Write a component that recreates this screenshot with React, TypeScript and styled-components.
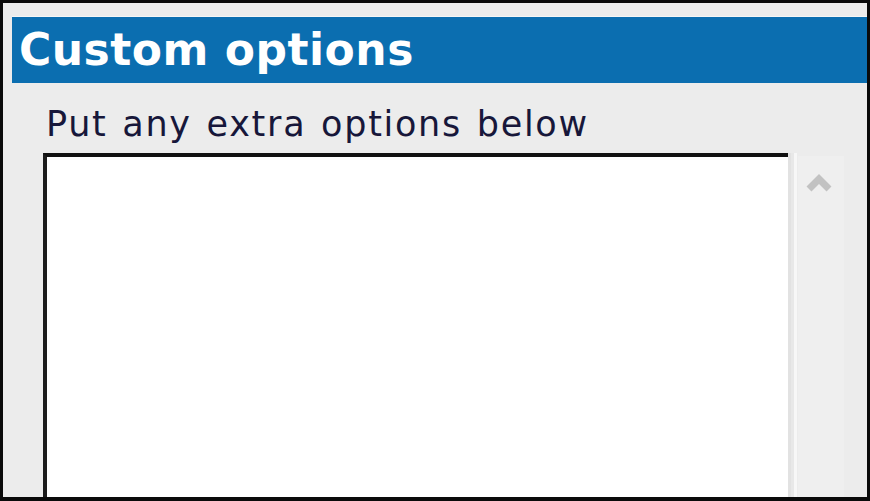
import React from 'react'
import styled, { createGlobalStyle } from 'styled-components'

const GlobalStyle = createGlobalStyle`
    html, body {
        margin: 0;
        padding: 0;
        background: #ececec;
    }
`

const Frame = styled.section`
    box-sizing: border-box;
    width: 870px;
    height: 501px;
    border: 3px solid #0a0a0a;
    border-bottom-width: 4px;
    background: #ececec;
    padding: 13px 0 0 9px;
    display: flex;
    flex-direction: column;
    overflow: hidden;
    font-family: "DejaVu Sans", Verdana, sans-serif;
`

const Header = styled.h1`
    margin: 0;
    height: 66px;
    line-height: 66px;
    padding-left: 7px;
    background: #0b6eb0;
    border-top: 1px solid #f6f6f6;
    color: #ffffff;
    font-size: 44px;
    font-weight: bold;
    letter-spacing: 0.5px;
    white-space: nowrap;
`

const Body = styled.div`
    flex: 1;
    display: flex;
    flex-direction: column;
    padding: 21px 23px 0 31px;
    min-height: 0;
`

const Label = styled.label`
    display: block;
    height: 40px;
    line-height: 40px;
    margin: 0 0 9px 3px;
    font-size: 35px;
    letter-spacing: 1.7px;
    word-spacing: 2px;
    color: #17173a;
    white-space: nowrap;
`

const Field = styled.div`
    flex: 1;
    display: flex;
    min-height: 0;
`

const Editor = styled.textarea`
    flex: 1;
    box-sizing: border-box;
    margin: 0;
    padding: 4px 6px;
    resize: none;
    outline: none;
    background: #ffffff;
    border: none;
    border-top: 4px solid #111111;
    border-left: 4px solid #1c1c1c;
    font-family: "DejaVu Sans", Verdana, sans-serif;
    font-size: 30px;
    overflow: hidden;
`

const Edge = styled.div`
    width: 10px;
    background: linear-gradient(
        to right,
        #e2e2e2 0 3px,
        #e8e8e8 3px 6px,
        #f7f7f7 6px 9px,
        #ececec 9px
    );
`

const Scrollbar = styled.div`
    width: 46px;
    margin-top: 3px;
    background: #efefef;
    display: flex;
    justify-content: center;
    padding: 15px 4px 0 0;
    box-sizing: border-box;
`

const Arrow = () => (
    <svg width="26" height="22" viewBox="0 0 26 22">
        <polyline
            points="3,18 13,8 23,18"
            fill="none"
            stroke="#c2c2c2"
            strokeWidth="7"
            strokeLinejoin="miter"
        />
    </svg>
)

export default function App() {
    return (
        <>
            <GlobalStyle />
            <Frame>
                <Header>Custom options</Header>
                <Body>
                    <Label htmlFor="extra-options">Put any extra options below</Label>
                    <Field>
                        <Editor id="extra-options" readOnly />
                        <Edge />
                        <Scrollbar>
                            <Arrow />
                        </Scrollbar>
                    </Field>
                </Body>
            </Frame>
        </>
    )
}
